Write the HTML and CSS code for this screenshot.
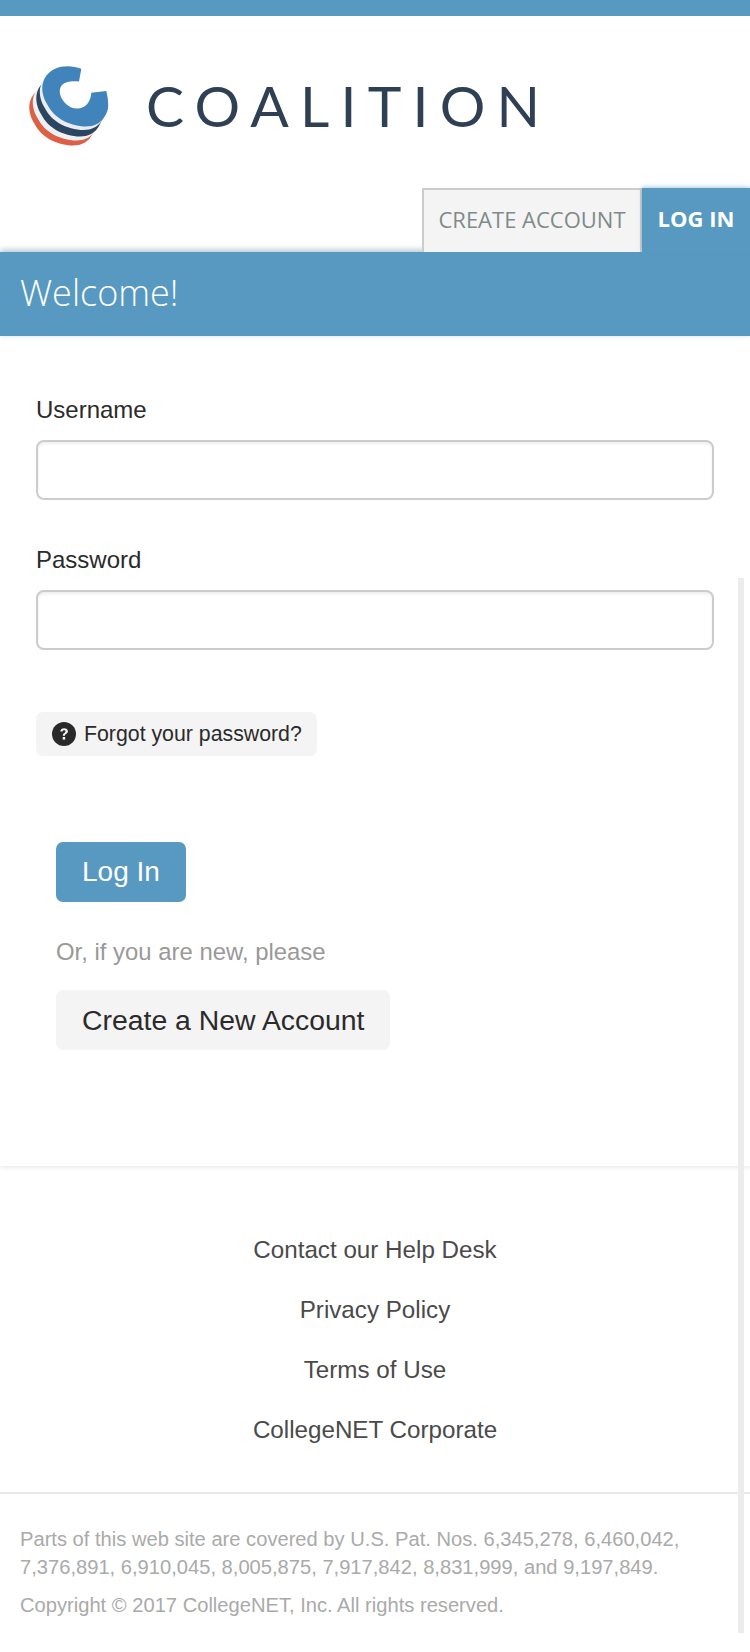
FILE: index.html
```html
<!DOCTYPE html>
<html lang="en">
<head>
<meta charset="utf-8">
<title>Coalition - Welcome</title>
<link rel="stylesheet" href="styles.css">
</head>
<body>
<div class="topbar"></div>
<header class="brand">
  <svg class="logo-mark" viewBox="0 0 80 80" width="80" height="80" aria-hidden="true">
    <defs>
      <path id="blob" d="M53.3 2.7C47 .5 40-.5 33 .8C23 3 16 10 14.5 19C13.5 26 16 33 19 38C23 46 29 51 34 54C41 58 50 60.5 58 60.5C66 60.5 72 57 75 53C79 48 81 42 80 36C80 32 79 28 78.3 25L51 15.5Z"/>
    </defs>
    <use href="#blob" fill="#dd5f45" transform="translate(-13 19)"/>
    <use href="#blob" fill="#eef1f3" transform="translate(-9.5 14)"/>
    <use href="#blob" fill="#2c4560" transform="translate(-6 10)"/>
    <use href="#blob" fill="#e9edf0" transform="translate(-2.5 3.5)"/>
    <path fill="#fff" d="M54 0L84 24L63.3 26.7C63 33 60 40 53 42C47 43.5 42 42 37 37C33 32 31 28 32 23C33 18 38 16 42 15.5C45 15 48 15 51 15.5Z"/>
    <path fill="#4183bb" d="M53.3 2.7C47 .5 40-.5 33 .8C23 3 16 10 14.5 19C13.5 26 16 33 19 38C23 46 29 51 34 54C41 58 50 60.5 58 60.5C66 60.5 72 57 75 53C79 48 81 42 80 36C80 32 79 28 78.3 25L63.3 26.7C63 33 60 40 53 42C47 43.5 42 42 37 37C33 32 31 28 32 23C33 18 38 16 42 15.5C45 15 48 15 51 15.5Z"/>
  </svg>
  <span class="logo-word">COALITION</span>
</header>
<nav class="tabs">
  <a class="tab tab-create">CREATE ACCOUNT</a>
  <a class="tab tab-login">LOG IN</a>
</nav>
<div class="band"><h1>Welcome!</h1></div>
<main class="content">
  <form class="form">
    <label class="field">
      <span>Username</span>
      <input type="text">
    </label>
    <label class="field">
      <span>Password</span>
      <input type="password">
    </label>
    <a class="forgot">
      <svg class="help" viewBox="0 0 24 24" width="24" height="24" aria-hidden="true">
        <circle cx="12" cy="12" r="12" fill="#2a2a2a"/>
        <path d="M8.3 9.4C8.5 7.3 10 6.2 12.1 6.2C14.3 6.2 15.9 7.4 15.9 9.3C15.9 10.7 15 11.4 14 12C13.2 12.5 13 12.8 13 13.8H10.8C10.8 12.4 11.2 11.7 12.3 11C13.1 10.5 13.5 10.1 13.5 9.5C13.5 8.7 12.9 8.3 12.1 8.3C11.2 8.3 10.7 8.8 10.6 9.6Z" fill="#f4f4f4"/>
        <rect x="10.7" y="15" width="2.5" height="2.6" fill="#f4f4f4"/>
      </svg>
      <span>Forgot your password?</span>
    </a>
    <div class="actions">
      <a class="btn btn-primary">Log In</a>
      <p class="hint">Or, if you are new, please</p>
      <a class="btn btn-secondary">Create a New Account</a>
    </div>
  </form>
</main>
<footer class="footer">
  <ul class="links">
    <li>Contact our Help Desk</li>
    <li>Privacy Policy</li>
    <li>Terms of Use</li>
    <li>CollegeNET Corporate</li>
  </ul>
  <div class="legal">
    <p>Parts of this web site are covered by U.S. Pat. Nos. 6,345,278, 6,460,042, 7,376,891, 6,910,045, 8,005,875, 7,917,842, 8,831,999, and 9,197,849.</p>
    <p class="copy">Copyright © 2017 CollegeNET, Inc. All rights reserved.</p>
  </div>
</footer>
<div class="side-strip"></div>
</body>
</html>
```

FILE: styles.css
```css
* { box-sizing: border-box; }
html, body { margin: 0; padding: 0; }
body {
  position: relative;
  width: 750px;
  height: 1652px;
  overflow: hidden;
  background: #fff;
  font-family: "Liberation Sans", Arial, sans-serif;
  color: #2b2b2b;
}
.topbar { height: 16px; background: #5799c0; }
.brand {
  height: 172px;
  display: flex;
  align-items: flex-start;
  padding: 50px 0 0 28px;
}
.logo-mark { display: block; overflow: visible; flex: none; }
.logo-word {
  margin: 4px 0 0 38px;
  font-family: Lato, sans-serif;
  font-weight: 400;
  font-size: 57px;
  line-height: 70px;
  letter-spacing: 11.2px;
  color: #2f4054;
}
.tabs {
  position: relative;
  z-index: 2;
  height: 64px;
  display: flex;
  justify-content: flex-end;
  font-family: "Open Sans", sans-serif;
  font-size: 22px;
}
.tab {
  display: flex;
  align-items: center;
  justify-content: center;
  height: 64px;
  padding-bottom: 5px;
}
.tab-create {
  width: 220px;
  background: #f4f4f4;
  border: 2px solid #ccc;
  border-bottom: 0;
  color: #7f8a8a;
}
.tab-login {
  width: 108px;
  background: #5799c0;
  color: #fff;
  font-weight: 700;
  box-shadow: 0 -1px 4px rgba(87, 153, 192, .5);
}
.band {
  position: relative;
  height: 84px;
  background: #5799c0;
  box-shadow: 0 -2px 6px rgba(90, 120, 150, .45);
  display: flex;
  align-items: center;
  padding: 0 20px 3px;
}
.band h1 {
  margin: 0;
  font-family: "Open Sans", sans-serif;
  font-weight: 300;
  font-size: 36px;
  color: #fff;
}
.content {
  height: 830px;
  padding: 60px 36px 0;
  box-shadow: 0 2px 4px rgba(0, 0, 0, .08);
}
.field { display: block; margin-bottom: 46px; }
.field:nth-of-type(2) { margin-bottom: 62px; }
.field span { display: block; font-size: 24px; line-height: 28px; height: 44px; }
.field input {
  display: block;
  width: 678px;
  height: 60px;
  border: 2px solid #ccc;
  border-radius: 8px;
  background: #fff;
  box-shadow: inset 0 2px 3px rgba(0, 0, 0, .07);
}
.forgot {
  display: inline-flex;
  align-items: center;
  gap: 8px;
  height: 44px;
  padding: 0 15px 0 16px;
  background: #f4f4f4;
  border-radius: 7px;
  font-size: 21.3px;
  vertical-align: top;
}
.help { flex: none; }
.actions { padding: 86px 0 0 20px; }
.btn {
  display: flex;
  align-items: center;
  width: fit-content;
  height: 60px;
  padding: 0 26px;
  border-radius: 7px;
  font-size: 28px;
}
.btn-primary { background: #5799c0; color: #fff; }
.btn-secondary { background: #f4f4f4; color: #2b2b2b; font-size: 28.4px; }
.hint {
  margin: 0;
  height: 88px;
  padding-top: 34px;
  font-size: 23.9px;
  line-height: 32px;
  color: #999;
}
.footer { color: #4a4a4a; }
.links {
  list-style: none;
  margin: 0;
  padding: 54px 0 32px;
  text-align: center;
  font-size: 24.2px;
  line-height: 60px;
  border-bottom: 2px solid #e9e9e9;
}
.legal {
  padding: 31px 20px 0;
  font-size: 20.15px;
  line-height: 28px;
  color: #aaa;
}
.legal p { margin: 0; }
.legal .copy { margin-top: 10px; }
.side-strip {
  position: absolute;
  top: 578px;
  left: 738px;
  width: 6px;
  height: 1055px;
  background: #ececec;
}
```
